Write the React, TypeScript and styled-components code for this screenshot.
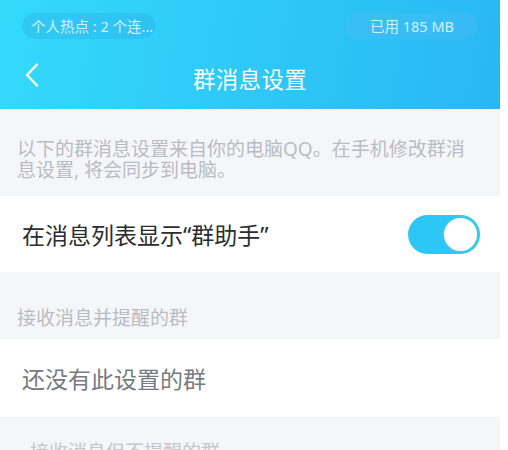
import React, { useState } from "react";
import styled, { createGlobalStyle } from "styled-components";

const GlobalStyle = createGlobalStyle`
  html, body {
    margin: 0;
    padding: 0;
    background: #ffffff;
    overflow: hidden;
  }
  body {
    font-family: "Noto Sans", "Noto Sans CJK SC", sans-serif;
  }
`;

const Page = styled.div`
  width: 500px;
  height: 450px;
  background: #f5f6fa;
  overflow: hidden;
`;

const Header = styled.header`
  height: 109px;
  background: linear-gradient(100deg, #33dafa 0%, #2fcaf7 45%, #29b7f4 100%);
  display: flex;
  flex-direction: column;
`;

const StatusBar = styled.div`
  display: flex;
  justify-content: space-between;
  padding: 13px 22px 0 22px;
`;

const Pill = styled.div`
  height: 26px;
  width: 133px;
  box-sizing: border-box;
  border-radius: 13px;
  background: rgba(40, 150, 225, 0.22);
  color: rgba(255, 255, 255, 0.78);
  font-size: 14.5px;
  line-height: 26px;
  padding: 0 9px;
  white-space: nowrap;
`;

const RightPill = styled(Pill)`
  background: rgba(80, 190, 245, 0.35);
  padding-left: 25px;
`;

const NavBar = styled.div`
  flex: 1;
  display: flex;
  align-items: center;
  justify-content: center;
  position: relative;
  padding-top: 8px;
`;

const BackButton = styled.button`
  position: absolute;
  left: 20px;
  top: 23px;
  width: 24px;
  height: 26px;
  padding: 0;
  border: 0;
  background: none;
  display: flex;
  align-items: center;
  justify-content: center;
`;

const Title = styled.h1`
  margin: 0;
  font-size: 22.5px;
  font-weight: 400;
  color: #ffffff;
  letter-spacing: 0.3px;
`;

const Notice = styled.p`
  margin: 0;
  padding: 30px 30px 15px 17px;
  font-size: 19px;
  line-height: 21px;
  color: #b9bcc3;
`;

const Row = styled.div<{ $height: number }>`
  height: ${(p) => p.$height}px;
  background: #ffffff;
  display: flex;
  align-items: center;
  justify-content: space-between;
  padding: 0 20px 0 22px;
`;

const RowText = styled.span<{ $muted?: boolean }>`
  font-size: 23px;
  color: ${(p) => (p.$muted ? "#777a80" : "#2a2c30")};
`;

const SectionLabel = styled.div<{ $height: number }>`
  height: ${(p) => p.$height}px;
  box-sizing: border-box;
  display: flex;
  align-items: flex-end;
  padding: 0 17px 10px 17px;
  font-size: 19px;
  line-height: 22px;
  color: #b9bcc3;
`;

const CutLabel = styled.div`
  padding: 24px 30px 0 30px;
  font-size: 19px;
  line-height: 22px;
  color: #c3c6cc;
`;

const Toggle = styled.button<{ $on: boolean }>`
  width: 72px;
  height: 39px;
  padding: 0;
  border: 0;
  border-radius: 20px;
  background: ${(p) => (p.$on ? "#2cc7f4" : "#dcdde2")};
  display: flex;
  align-items: center;
  justify-content: ${(p) => (p.$on ? "flex-end" : "flex-start")};
  cursor: pointer;
`;

const Knob = styled.span`
  width: 37px;
  height: 37px;
  box-sizing: border-box;
  border-radius: 50%;
  background: #ffffff;
  border: 2px solid #3ec8ec;
  margin: 0 1px;
`;

const App: React.FC = () => {
  const [showHelper, setShowHelper] = useState(true);

  return (
    <>
      <GlobalStyle />
      <Page>
        <Header>
          <StatusBar>
            <Pill>个人热点 : 2 个连...</Pill>
            <RightPill>已用 185 MB</RightPill>
          </StatusBar>
          <NavBar>
            <BackButton aria-label="返回">
              <svg width="14" height="24" viewBox="0 0 14 24">
                <path
                  d="M12 1.5 L2 12 L12 22.5"
                  fill="none"
                  stroke="#ffffff"
                  strokeWidth="2.4"
                  strokeLinecap="round"
                  strokeLinejoin="round"
                />
              </svg>
            </BackButton>
            <Title>群消息设置</Title>
          </NavBar>
        </Header>

        <Notice>以下的群消息设置来自你的电脑QQ。在手机修改群消息设置, 将会同步到电脑。</Notice>

        <Row $height={76}>
          <RowText>在消息列表显示“群助手”</RowText>
          <Toggle $on={showHelper} onClick={() => setShowHelper(!showHelper)}>
            <Knob />
          </Toggle>
        </Row>

        <SectionLabel $height={67}>接收消息并提醒的群</SectionLabel>

        <Row $height={78}>
          <RowText $muted>还没有此设置的群</RowText>
        </Row>

        <CutLabel>接收消息但不提醒的群</CutLabel>
      </Page>
    </>
  );
};

export default App;
